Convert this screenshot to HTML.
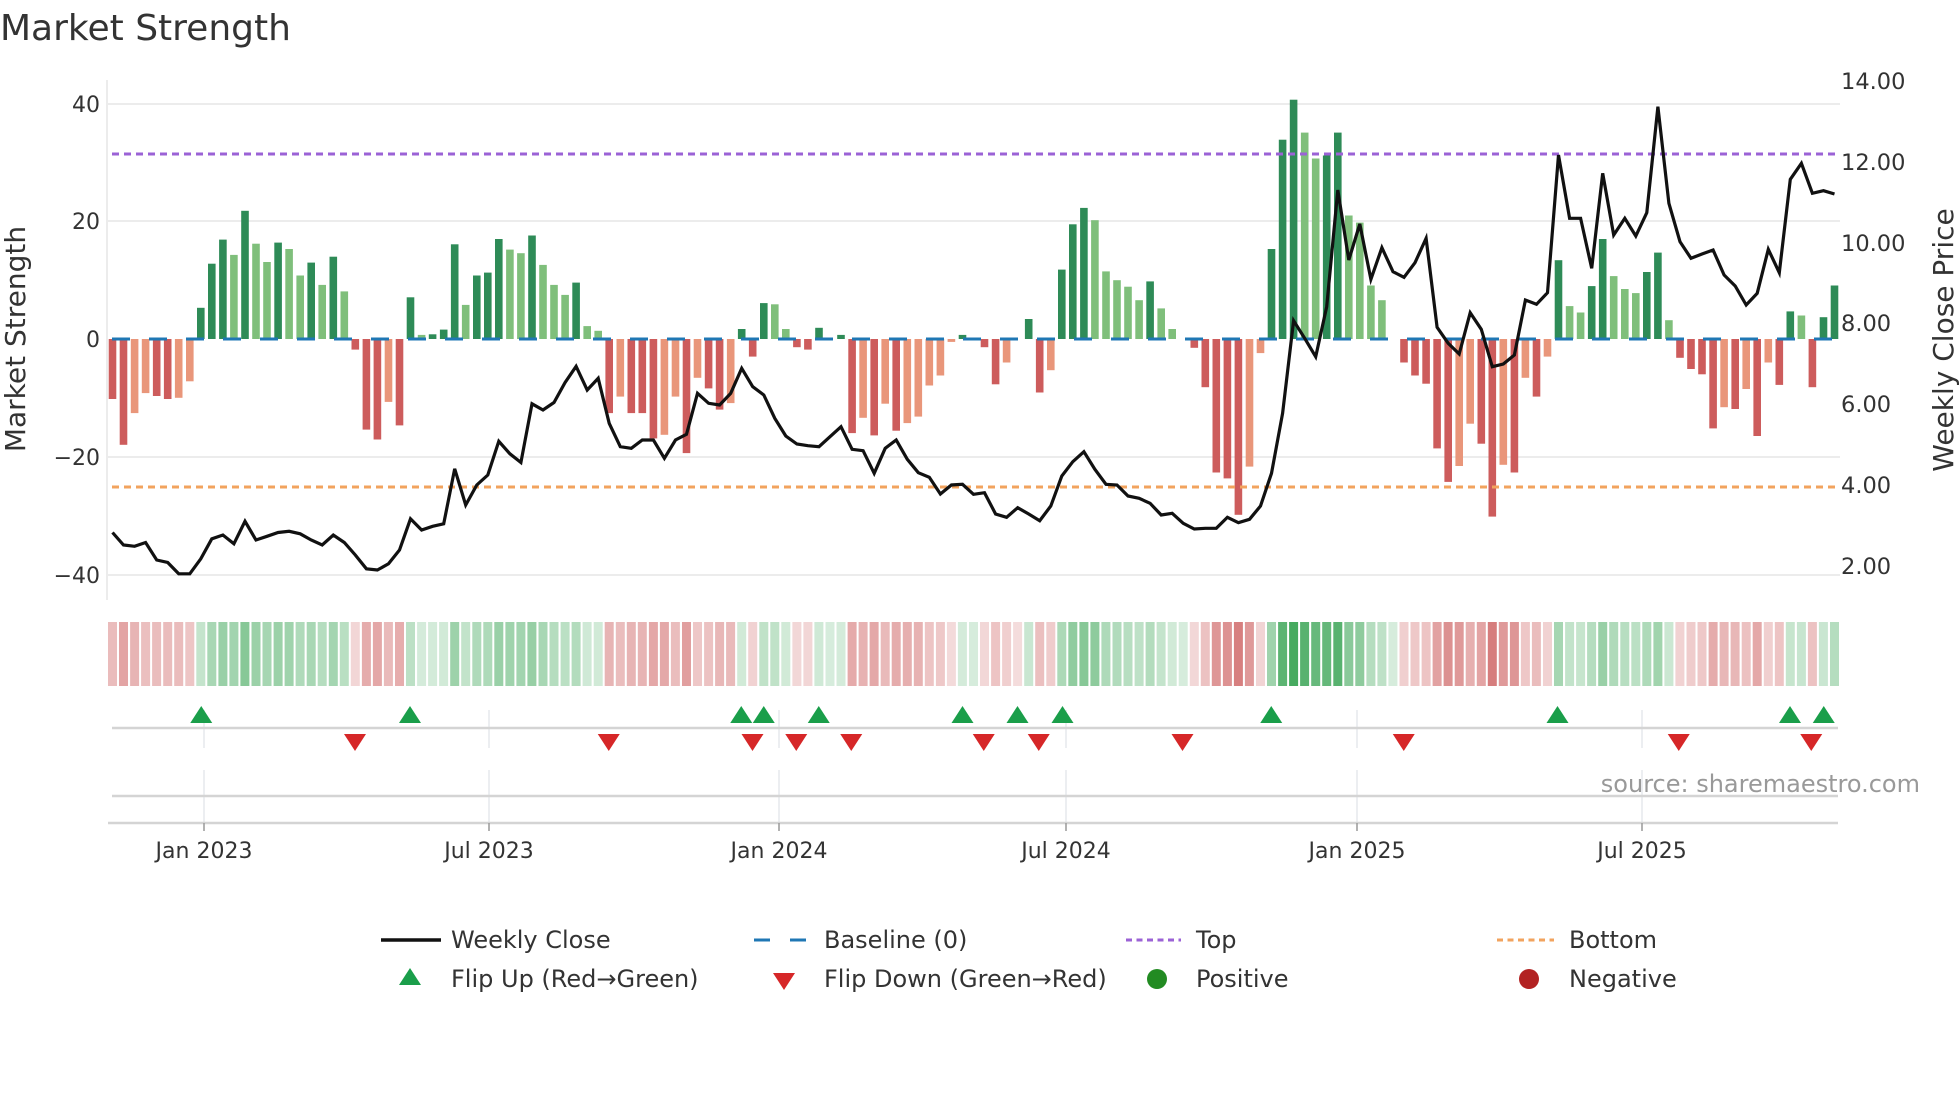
<!DOCTYPE html>
<html><head><meta charset="utf-8">
<style>
html,body{margin:0;padding:0;background:#fff;}
body{width:1960px;height:1102px;overflow:hidden;font-family:"DejaVu Sans","Liberation Sans",sans-serif;}
svg text{font-family:"DejaVu Sans","Liberation Sans",sans-serif;}
</style></head>
<body>
<svg id="c" width="1960" height="1102" viewBox="0 0 1960 1102" xmlns="http://www.w3.org/2000/svg">
<text x="0" y="40" font-size="36" fill="#333">Market Strength</text>
<g stroke="#ececec" stroke-width="2">
<line x1="108" y1="104" x2="1840" y2="104"/>
<line x1="108" y1="221" x2="1840" y2="221"/>
<line x1="108" y1="457" x2="1840" y2="457"/>
<line x1="108" y1="575" x2="1840" y2="575"/>
</g>
<line x1="107" y1="80" x2="107" y2="600" stroke="#ececec" stroke-width="2"/>
<g id="bars"></g>
<line x1="112" y1="339" x2="1838" y2="339" stroke="#1f77b4" stroke-width="3" stroke-dasharray="18,19"/>
<line x1="112" y1="154" x2="1838" y2="154" stroke="#9b62d6" stroke-width="3" stroke-dasharray="7,5"/>
<line x1="112" y1="487" x2="1838" y2="487" stroke="#f2a35e" stroke-width="3" stroke-dasharray="7,5"/>
<polyline id="price" fill="none" stroke="#111" stroke-width="3.2" stroke-linejoin="miter"/>
<g font-size="22" fill="#333" text-anchor="end">
<text x="100" y="112">40</text>
<text x="100" y="229">20</text>
<text x="100" y="347">0</text>
<text x="100" y="465">−20</text>
<text x="100" y="583">−40</text>
</g>
<g font-size="22.5" fill="#333">
<text x="1841" y="89">14.00</text>
<text x="1841" y="170">12.00</text>
<text x="1841" y="251">10.00</text>
<text x="1841" y="331">8.00</text>
<text x="1841" y="412">6.00</text>
<text x="1841" y="493">4.00</text>
<text x="1841" y="574">2.00</text>
</g>
<text transform="translate(25,339) rotate(-90)" font-size="28" fill="#333" text-anchor="middle">Market Strength</text>
<text transform="translate(1953,340) rotate(-90)" font-size="28" fill="#333" text-anchor="middle">Weekly Close Price</text>
<g id="strip"></g>
<g stroke="#e6e8ec" stroke-width="1.5">
<line x1="204" y1="710" x2="204" y2="748"/><line x1="489" y1="710" x2="489" y2="748"/><line x1="779" y1="710" x2="779" y2="748"/><line x1="1066" y1="710" x2="1066" y2="748"/><line x1="1357" y1="710" x2="1357" y2="748"/><line x1="1642" y1="710" x2="1642" y2="748"/>
<line x1="204" y1="770" x2="204" y2="822"/><line x1="489" y1="770" x2="489" y2="822"/><line x1="779" y1="770" x2="779" y2="822"/><line x1="1066" y1="770" x2="1066" y2="822"/><line x1="1357" y1="770" x2="1357" y2="822"/><line x1="1642" y1="770" x2="1642" y2="822"/>
</g>
<line x1="112" y1="728" x2="1838" y2="728" stroke="#d4d4d4" stroke-width="2.5"/>
<line x1="112" y1="796" x2="1838" y2="796" stroke="#d4d4d4" stroke-width="2.5"/>
<line x1="108" y1="823" x2="1838" y2="823" stroke="#d4d4d4" stroke-width="2.5"/>
<g stroke="#999" stroke-width="1.5">
<line x1="204" y1="823" x2="204" y2="831"/><line x1="489" y1="823" x2="489" y2="831"/><line x1="779" y1="823" x2="779" y2="831"/><line x1="1066" y1="823" x2="1066" y2="831"/><line x1="1357" y1="823" x2="1357" y2="831"/><line x1="1642" y1="823" x2="1642" y2="831"/>
</g>
<g id="marks"></g>
<text x="1920" y="792" font-size="24" fill="#999" text-anchor="end">source: sharemaestro.com</text>
<g font-size="22" fill="#333" text-anchor="middle">
<text x="204" y="858">Jan 2023</text>
<text x="489" y="858">Jul 2023</text>
<text x="779" y="858">Jan 2024</text>
<text x="1066" y="858">Jul 2024</text>
<text x="1357" y="858">Jan 2025</text>
<text x="1642" y="858">Jul 2025</text>
</g>
<line x1="381" y1="940" x2="441" y2="940" stroke="#111" stroke-width="3.5"/>
<line x1="754" y1="940" x2="808" y2="940" stroke="#1f77b4" stroke-width="3" stroke-dasharray="16,20"/>
<line x1="1126" y1="940" x2="1181" y2="940" stroke="#9b62d6" stroke-width="3" stroke-dasharray="6,4.5"/>
<line x1="1497" y1="940" x2="1554" y2="940" stroke="#f2a35e" stroke-width="3" stroke-dasharray="6,4.5"/>
<polygon points="410,968 399,985 421,985" fill="#1a9e4a"/>
<polygon points="773,973 795,973 784,990" fill="#d62728"/>
<circle cx="1157" cy="979" r="10" fill="#228b22"/>
<circle cx="1529" cy="979" r="10" fill="#b22222"/>
<g font-size="24" fill="#333">
<text x="451" y="948">Weekly Close</text>
<text x="824" y="948">Baseline (0)</text>
<text x="1196" y="948">Top</text>
<text x="1569" y="948">Bottom</text>
<text x="451" y="987">Flip Up (Red→Green)</text>
<text x="824" y="987">Flip Down (Green→Red)</text>
<text x="1196" y="987">Positive</text>
<text x="1569" y="987">Negative</text>
</g>
</svg>
<script>
var V=[-10.2,-18,-12.6,-9.2,-9.7,-10.2,-10,-7.2,5.3,12.8,16.9,14.3,21.8,16.2,13.1,16.4,15.3,10.8,13,9.2,14,8.1,-1.8,-15.4,-17.1,-10.7,-14.7,7.1,0.7,0.8,1.6,16.1,5.8,10.8,11.3,17,15.2,14.6,17.6,12.6,9.2,7.5,9.6,2.2,1.4,
-12.6,-9.8,-12.6,-12.6,-16.9,-16.3,-9.8,-19.4,-6.6,-8.4,-12,-10.9,1.7,-3,6.1,5.9,1.7,-1.4,-1.8,1.9,0,0.7,-16,-13.4,-16.4,-11,-15.6,-14.3,-13.2,-7.9,-6.2,-0.5,0.7,0,-1.4,-7.7,-4,0,3.4,-9.1,-5.3,11.8,19.5,22.3,20.2,11.5,10,8.9,6.6,9.8,5.2,1.7,0,-1.5,-8.2,-22.7,-23.7,-29.9,-21.7,-2.4,
15.3,33.9,40.7,35.1,30.7,31.2,35.1,21,19.8,9.1,6.6,0,-4,-6.2,-7.6,-18.6,-24.3,-21.6,-14.4,-17.8,-30.2,-21.4,-22.7,-6.6,-9.8,-3,13.4,5.6,4.5,9,17,10.7,8.5,7.8,11.4,14.7,3.2,-3.2,-5.1,-6,-15.2,-11.6,-11.9,-8.5,-16.5,-4,-7.8,4.7,4,-8.2,3.7,9.1];
var Lset={2:1,3:1,6:1,7:1,11:1,13:1,14:1,16:1,17:1,19:1,21:1,25:1,28:1,32:1,36:1,37:1,39:1,40:1,41:1,43:1,44:1,
46:1,50:1,51:1,53:1,56:1,60:1,61:1,68:1,70:1,72:1,73:1,74:1,75:1,76:1,81:1,85:1,89:1,90:1,91:1,92:1,93:1,95:1,96:1,103:1,104:1,
108:1,109:1,112:1,113:1,114:1,115:1,122:1,123:1,126:1,128:1,130:1,132:1,133:1,136:1,137:1,138:1,141:1,146:1,148:1,150:1,153:1};
var N=V.length, x0=112.5, dx=(1834.5-112.5)/(N-1);
function X(i){return x0+dx*i;}
var b='',s='';
for(var i=0;i<N;i++){
 var v=V[i],x=X(i),L=Lset[i];
 if(v!==0){
  var h=Math.abs(v)*5.88, y=v>0?339-h:339;
  var col=v>0?(L?'#7fbf7b':'#2e8b57'):(L?'#e9967a':'#cd5c5c');
  b+='<rect x="'+(x-3.8).toFixed(1)+'" y="'+y.toFixed(1)+'" width="7.6" height="'+h.toFixed(1)+'" fill="'+col+'"/>';
 }
 var pv=v, j=i; while(pv===0&&j>0){j--;pv=V[j];}
 var a=Math.min(1,0.22+Math.abs(v)/40*0.78);
 var sc=pv>0?'rgba(70,170,95,'+a.toFixed(2)+')':'rgba(205,95,95,'+a.toFixed(2)+')';
 s+='<rect x="'+(x-dx/2+1).toFixed(1)+'" y="622" width="'+(dx-2).toFixed(1)+'" height="64" fill="'+sc+'"/>';
}
document.getElementById('bars').innerHTML=b;
document.getElementById('strip').innerHTML=s;
var D=[426,436,437,434,448,450,459,459,447,431,428,435,417,432,429,426,425,427,432,436,428,434,444,455,456,451,440,415,424,421,419,375,404,388,380,353,363,370,323,328,322,306,293];
var P=[];for(var k=0;k<D.length;k++)P.push(D[k]*1.25);
var Z3=[930,895,1030,1100,1105,1080,1080,1135,1080,1063,940,970,975,940,865,920,945,1015,1068,1092,1097,1100,1070,1040,1108,1112,1180,1105,1080,1138,1178,1192,1242,1215,1213,1243,1238,1302,1312,1283,1302,1322,1278,1188,1145,1115,1168,1213,1215,1248,1255,1270,1305,1300,1330,1347,1345,1345,1312,1328,1318,1278];
for(k=0;k<Z3.length;k++)P.push(80+Z3[k]/3);
var Z4=[1180,1000,722,775,830,680,330,540,432,598,503,575,592,548,475,742,790,822,698,748,860,852,825,660,673,638,225,415,415,565,280,465,415,468,398,80,370,485,535,522,510,585,618,675,640,508,578,298,250,340,332,342];
for(k=0;k<Z4.length;k++)P.push(80+Z4[k]/3);
var pts='';for(k=0;k<P.length&&k<N;k++)pts+=X(k).toFixed(1)+','+P[k].toFixed(1)+' ';
document.getElementById('price').setAttribute('points',pts);
var up=[161,328,593,611,655,770,814,850,1017,1246,1432,1459],dn=[284,487,602,637,681,787,831,946,1123,1343,1449];
var m='';
up.forEach(function(u){var x=u*1.25;m+='<polygon points="'+x+',706 '+(x-11)+',723 '+(x+11)+',723" fill="#1a9e4a"/>';});
dn.forEach(function(u){var x=u*1.25;m+='<polygon points="'+(x-11)+',734 '+(x+11)+',734 '+x+',751" fill="#d62728"/>';});
document.getElementById('marks').innerHTML=m;
</script>
</body></html>
